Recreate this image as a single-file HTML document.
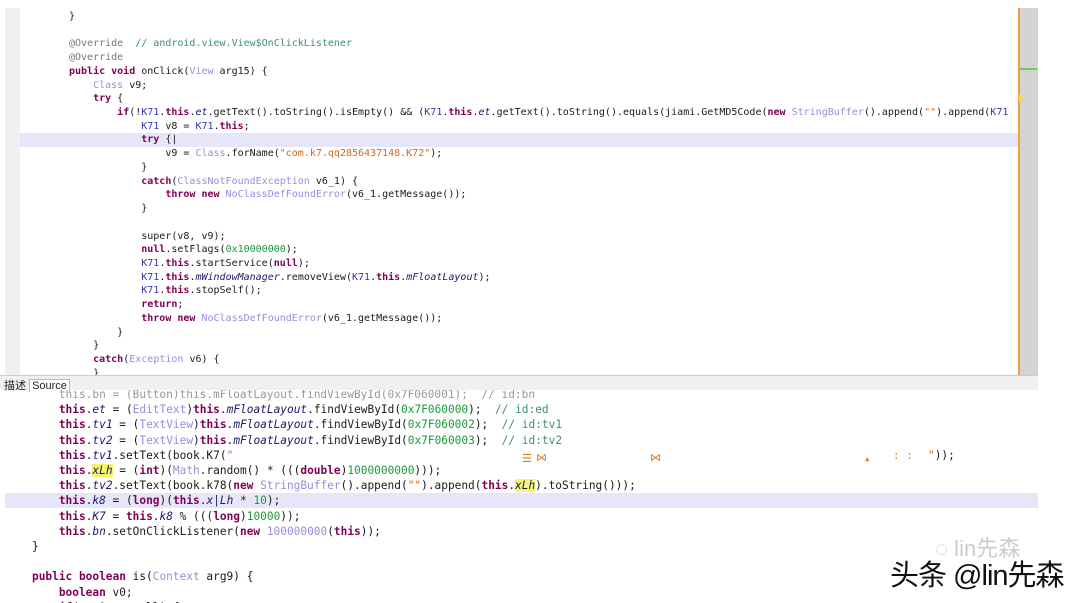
<!DOCTYPE html>
<html><head><meta charset="utf-8"><style>
body{margin:0;width:1080px;height:603px;background:#fff;position:relative;overflow:hidden;font-family:"Liberation Mono",monospace}
.pane{position:absolute;left:5px;top:8px;width:1033px;height:367px;background:#fff;overflow:hidden}
.gut{position:absolute;left:0;top:0;width:15px;height:367px;background:#f0f0f0}
.sb{position:absolute;left:1013px;top:0;width:20px;height:367px;background:#d4d4d4}
.ol{position:absolute;left:1013px;top:0;width:2px;height:367px;background:#f0a040}
pre{margin:0;position:absolute;white-space:pre;color:#1a1a1a}
.t{left:64px;top:2px;font-size:10px;line-height:13.72px}
.b{left:32px;top:-3px;font-size:11.15px;line-height:15.2px}
.k{color:#7f0055;font-weight:bold}
.ty{color:#a08ad8}
.c{color:#3f8f6f}
.s{color:#d2691e}
.n{color:#1a9a3a}
.cl{color:#3535b0}
.f{color:#1a1a6a;font-style:italic}
.hl{background:#f5f570}
.tabs{position:absolute;left:0;top:375px;width:1038px;height:14px;background:#f0f0f0;border-top:1px solid #ccc}
.bot{position:absolute;left:0;top:390px;width:1080px;height:213px;overflow:hidden}
.ic{position:absolute;color:#e07a20;font-size:11px}
</style></head><body>
<div class="pane">
<div class="gut"></div>
<div style="position:absolute;left:15px;top:125px;width:998px;height:14px;background:#e6e6f8"></div>
<div class="sb"></div><div class="ol"></div>
<div style="position:absolute;left:1015px;top:60px;width:17px;height:2px;background:#60d060"></div>
<div style="position:absolute;left:1014px;top:86px;width:0;height:0;border-left:5px solid #f0e040;border-top:4px solid transparent;border-bottom:4px solid transparent"></div>
<pre class="t">}

<span style="color:#777">@Override</span>  <span class="c">// android.view.View$OnClickListener</span>
<span style="color:#777">@Override</span>
<span class="k">public void</span> onClick(<span class="ty">View</span> arg15) {
    <span class="ty">Class</span> v9;
    <span class="k">try</span> {
        <span class="k">if</span>(!<span class="cl">K71</span>.<span class="k">this</span>.<span class="f">et</span>.getText().toString().isEmpty() &amp;&amp; (<span class="cl">K71</span>.<span class="k">this</span>.<span class="f">et</span>.getText().toString().equals(jiami.GetMD5Code(<span class="k">new</span> <span class="ty">StringBuffer</span>().append(<span class="s">""</span>).append(<span class="cl">K71</span>
            <span class="cl">K71</span> v8 = <span class="cl">K71</span>.<span class="k">this</span>;
            <span class="k">try</span> {|
                v9 = <span class="ty">Class</span>.forName(<span class="s">"com.k7.qq2856437148.K72"</span>);
            }
            <span class="k">catch</span>(<span class="ty">ClassNotFoundException</span> v6_1) {
                <span class="k">throw new</span> <span class="ty">NoClassDefFoundError</span>(v6_1.getMessage());
            }

            super(v8, v9);
            <span class="k">null</span>.setFlags(<span class="n">0x10000000</span>);
            <span class="cl">K71</span>.<span class="k">this</span>.startService(<span class="k">null</span>);
            <span class="cl">K71</span>.<span class="k">this</span>.<span class="f">mWindowManager</span>.removeView(<span class="cl">K71</span>.<span class="k">this</span>.<span class="f">mFloatLayout</span>);
            <span class="cl">K71</span>.<span class="k">this</span>.stopSelf();
            <span class="k">return</span>;
            <span class="k">throw new</span> <span class="ty">NoClassDefFoundError</span>(v6_1.getMessage());
        }
    }
    <span class="k">catch</span>(<span class="ty">Exception</span> v6) {
    }</pre>
</div>
<div class="tabs"><span style="position:absolute;left:4px;top:1px;font:11px 'Liberation Sans','Noto Sans CJK SC',sans-serif;color:#222">描述 <span style="background:#fff;border:1px solid #bbb;border-bottom:none;padding:0 2px">Source</span></span></div>
<div class="bot">
<div style="position:absolute;left:5px;top:103px;width:1033px;height:15px;background:#e6e6f8"></div>
<pre class="b"><span style="color:#999">    this.bn = (Button)this.mFloatLayout.findViewById(0x7F060001);  // id:bn</span>
    <span class="k">this</span>.<span class="f">et</span> = (<span class="ty">EditText</span>)<span class="k">this</span>.<span class="f">mFloatLayout</span>.findViewById(<span class="n">0x7F060000</span>);  <span class="c">// id:ed</span>
    <span class="k">this</span>.<span class="f">tv1</span> = (<span class="ty">TextView</span>)<span class="k">this</span>.<span class="f">mFloatLayout</span>.findViewById(<span class="n">0x7F060002</span>);  <span class="c">// id:tv1</span>
    <span class="k">this</span>.<span class="f">tv2</span> = (<span class="ty">TextView</span>)<span class="k">this</span>.<span class="f">mFloatLayout</span>.findViewById(<span class="n">0x7F060003</span>);  <span class="c">// id:tv2</span>
    <span class="k">this</span>.<span class="f">tv1</span>.setText(book.K7(<span class="s">"</span>
    <span class="k">this</span>.<span class="f hl">xLh</span> = (<span class="k">int</span>)(<span class="ty">Math</span>.random() * (((<span class="k">double</span>)<span class="n">1000000000</span>)));
    <span class="k">this</span>.<span class="f">tv2</span>.setText(book.k78(<span class="k">new</span> <span class="ty">StringBuffer</span>().append(<span class="s">""</span>).append(<span class="k">this</span>.<span class="f hl">xLh</span>).toString()));
    <span class="k">this</span>.<span class="f">k8</span> = (<span class="k">long</span>)(<span class="k">this</span>.<span class="f">x|Lh</span> * <span class="n">10</span>);
    <span class="k">this</span>.<span class="f">K7</span> = <span class="k">this</span>.<span class="f">k8</span> % (((<span class="k">long</span>)<span class="n">10000</span>));
    <span class="k">this</span>.<span class="f">bn</span>.setOnClickListener(<span class="k">new</span> <span class="ty">100000000</span>(<span class="k">this</span>));
}

<span class="k">public boolean</span> is(<span class="ty">Context</span> arg9) {
    <span class="k">boolean</span> v0;
    <span class="k">if</span>(arg9 == null) {</pre>
<span class="ic" style="left:522px;top:62px">☰</span>
<span class="ic" style="left:536px;top:61px">⋈</span>
<span class="ic" style="left:650px;top:61px">⋈</span>
<span class="ic" style="left:864px;top:62px">▴</span>
<span class="ic" style="left:893px;top:61px">: :</span>
<pre class="b" style="left:928px;top:58px"><span class="s">"</span>));</pre>
</div>
<div style="position:absolute;left:935px;top:531px;font:22px 'Liberation Sans','Noto Sans CJK SC',sans-serif;color:#ccc">◌ lin先森</div>
<div style="position:absolute;left:890px;top:552px;font:29px 'Liberation Sans','Noto Sans CJK SC',sans-serif;color:#111;text-shadow:0 0 2px #fff,0 0 2px #fff;letter-spacing:-1px">头条 @lin先森</div>
</body></html>
